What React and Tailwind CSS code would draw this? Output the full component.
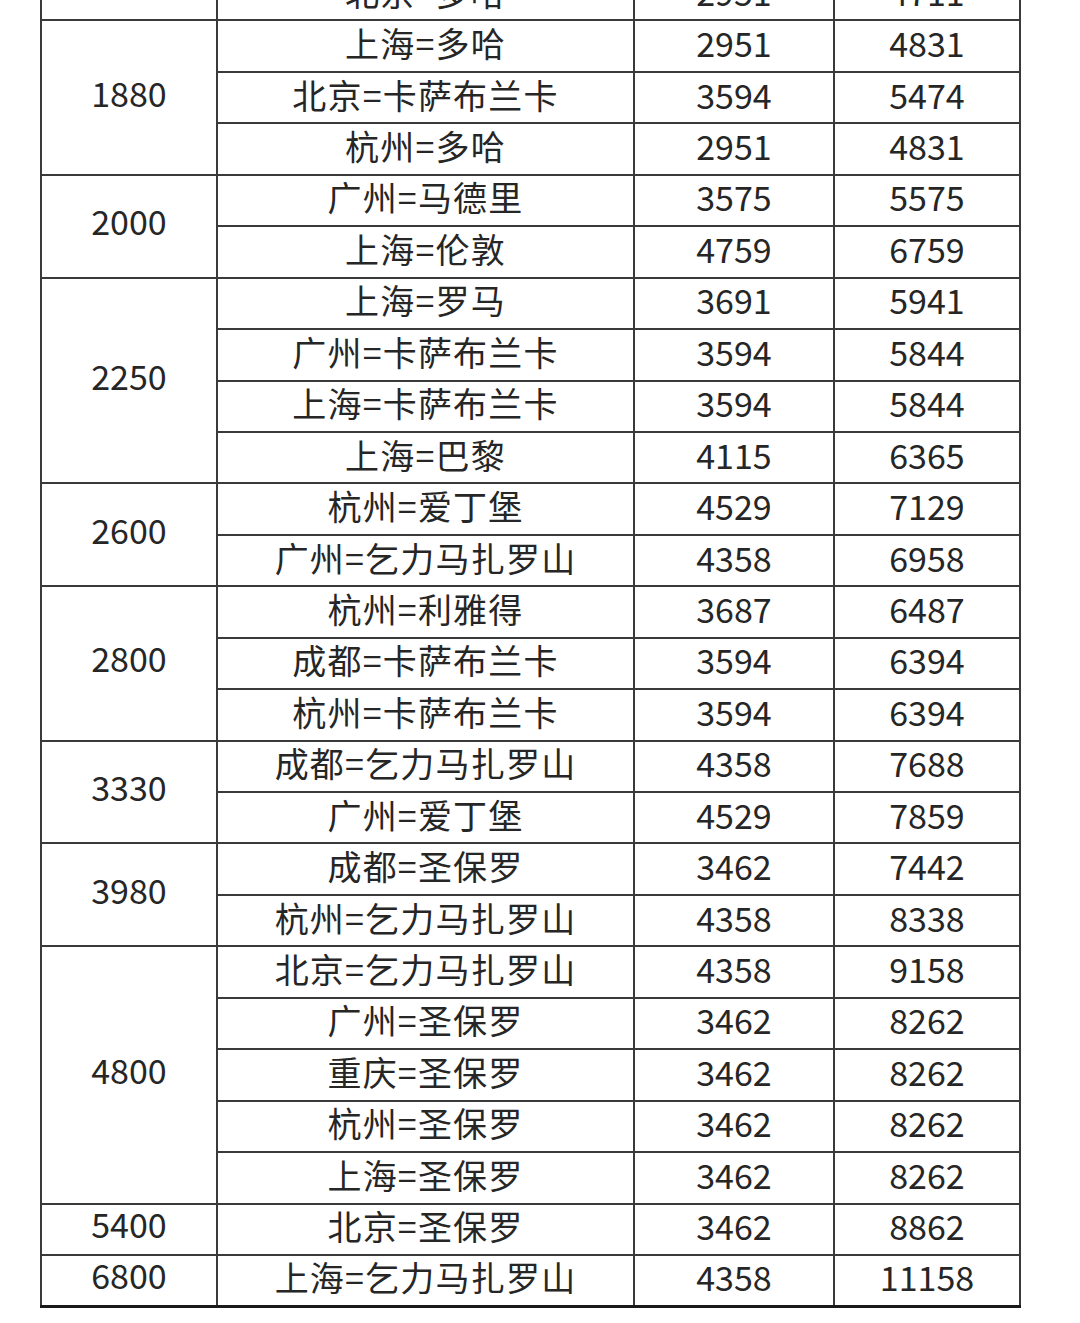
import React from "react";

const groups = [
  { price: "", rows: [["北京=多哈", "2951", "4711"]] },
  {
    price: "1880",
    rows: [
      ["上海=多哈", "2951", "4831"],
      ["北京=卡萨布兰卡", "3594", "5474"],
      ["杭州=多哈", "2951", "4831"],
    ],
  },
  {
    price: "2000",
    rows: [
      ["广州=马德里", "3575", "5575"],
      ["上海=伦敦", "4759", "6759"],
    ],
  },
  {
    price: "2250",
    rows: [
      ["上海=罗马", "3691", "5941"],
      ["广州=卡萨布兰卡", "3594", "5844"],
      ["上海=卡萨布兰卡", "3594", "5844"],
      ["上海=巴黎", "4115", "6365"],
    ],
  },
  {
    price: "2600",
    rows: [
      ["杭州=爱丁堡", "4529", "7129"],
      ["广州=乞力马扎罗山", "4358", "6958"],
    ],
  },
  {
    price: "2800",
    rows: [
      ["杭州=利雅得", "3687", "6487"],
      ["成都=卡萨布兰卡", "3594", "6394"],
      ["杭州=卡萨布兰卡", "3594", "6394"],
    ],
  },
  {
    price: "3330",
    rows: [
      ["成都=乞力马扎罗山", "4358", "7688"],
      ["广州=爱丁堡", "4529", "7859"],
    ],
  },
  {
    price: "3980",
    rows: [
      ["成都=圣保罗", "3462", "7442"],
      ["杭州=乞力马扎罗山", "4358", "8338"],
    ],
  },
  {
    price: "4800",
    rows: [
      ["北京=乞力马扎罗山", "4358", "9158"],
      ["广州=圣保罗", "3462", "8262"],
      ["重庆=圣保罗", "3462", "8262"],
      ["杭州=圣保罗", "3462", "8262"],
      ["上海=圣保罗", "3462", "8262"],
    ],
  },
  { price: "5400", rows: [["北京=圣保罗", "3462", "8862"]] },
  { price: "6800", rows: [["上海=乞力马扎罗山", "4358", "11158"]] },
];

const cell = "border-2 border-[#3a3a3a] text-center align-middle px-0 pt-0 pb-[6px] leading-none";
const priceCell = "border-2 border-[#3a3a3a] text-center align-middle px-0 pt-0 pb-[10px] leading-none";

export default function App() {
  return (
    <div className="w-[1080px] h-[1323px] bg-white overflow-hidden">
      <table
        className="table-fixed border-collapse w-[979px] ml-[40px] mt-[-32px] text-[34px] text-[#262626] border-b-[3px] border-b-[#1a1a1a]"
        style={{ fontFamily: '"Noto Sans CJK SC", "Noto Sans", sans-serif' }}
      >
        <colgroup>
          <col className="w-[176px]" />
          <col className="w-[417px]" />
          <col className="w-[200px]" />
          <col className="w-[186px]" />
        </colgroup>
        <tbody>
          {groups.map((g, gi) =>
            g.rows.map((r, ri) => (
              <tr key={gi + "-" + ri} className="h-[51.44px]">
                {ri === 0 && (
                  <td rowSpan={g.rows.length} className={priceCell}>
                    {g.price}
                  </td>
                )}
                <td className={cell + " tracking-[1.2px]"}>{r[0]}</td>
                <td className={cell}>{r[1]}</td>
                <td className={cell}>{r[2]}</td>
              </tr>
            ))
          )}
        </tbody>
      </table>
    </div>
  );
}
